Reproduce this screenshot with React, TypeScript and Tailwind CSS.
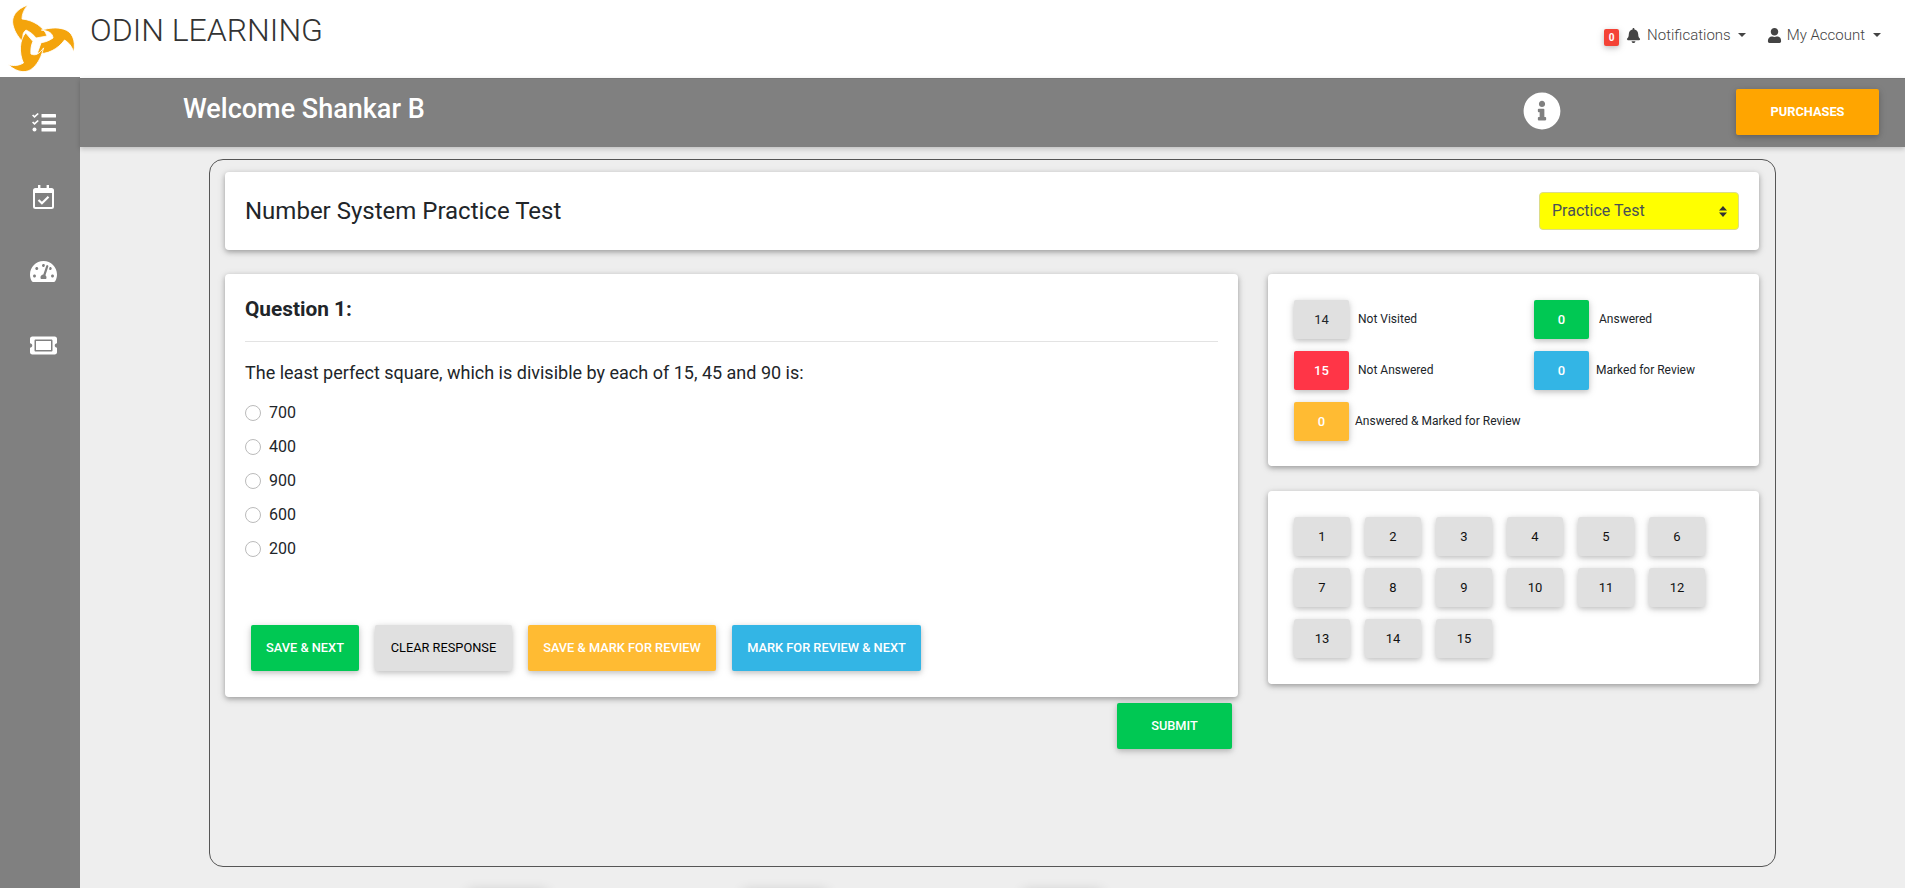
import React from "react";
import { FaBell, FaUser, FaInfoCircle, FaTachometerAlt, FaTicketAlt } from "react-icons/fa";

const shadow = "shadow-[0_2px_5px_0_rgba(0,0,0,0.16),0_2px_10px_0_rgba(0,0,0,0.12)]";
const cardShadow = "shadow-[0_2px_5px_0_rgba(0,0,0,0.26),0_2px_10px_0_rgba(0,0,0,0.12)]";

const Logo = () => {
  const arm =
    "M28 5C16 9 11 17 13 25C15 33 19 38 25 44C22 37 22 33 26 30C30 32 33 34 36 38L47 36C44 27 33 20 22 19C22 14 24 9 28 5Z";
  return (
    <svg width="80" height="78" viewBox="0 0 80 78">
      <path d={arm} fill="#f4a40c" stroke="#fff" strokeWidth="0.8" />
      <path d={arm} fill="#f4a40c" stroke="#fff" strokeWidth="0.8" transform="translate(1 1) rotate(120 37 41)" />
      <path d={arm} fill="#f4a40c" stroke="#fff" strokeWidth="0.8" transform="translate(-2 -2) rotate(240 37 41)" />
    </svg>
  );
};

const ChecklistIcon = () => (
  <svg width="24" height="20" viewBox="0 0 24 20" fill="#fff">
    <path d="M0 2.5l1.2-1 1.3 1.3L5.6 0 6.8 1 2.5 5z" />
    <path d="M0 9.5l1.2-1 1.3 1.3L5.6 7l1.2 1-4.3 4z" />
    <circle cx="2.5" cy="16.5" r="2" />
    <rect x="9.5" y="1" width="14.5" height="3.6" rx="0.6" />
    <rect x="9.5" y="8" width="14.5" height="3.6" rx="0.6" />
    <rect x="9.5" y="15" width="14.5" height="3.6" rx="0.6" />
  </svg>
);

const CalendarIcon = () => (
  <svg width="21" height="24" viewBox="0 0 21 24" fill="none">
    <rect x="1" y="4" width="19" height="19" rx="1.5" stroke="#fff" strokeWidth="2" />
    <path d="M1 4h19v4H1z" fill="#fff" />
    <path d="M5 0h2.4v4H5zM13.6 0H16v4h-2.4z" fill="#fff" />
    <path d="M5.5 15l3.4 3.2 6.6-6.4" stroke="#fff" strokeWidth="2.2" />
  </svg>
);

const Caret = ({ className }: { className: string }) => (
  <span className={`${className} inline-block border-x-[4px] border-t-[4px] border-x-transparent border-t-[#444]`} />
);

const SideItem = ({ children }: { children: React.ReactNode }) => (
  <div className="flex h-[74px] items-center justify-center pl-[7px]">{children}</div>
);

const Btn = ({ label, color }: { label: string; color: string }) => (
  <button className={`h-[46px] rounded-[2px] px-[15px] text-[12.8px] uppercase ${color} ${shadow}`}>
    {label}
  </button>
);

const Legend = ({ n, label, color, gap }: { n: number; label: string; color: string; gap: string }) => (
  <div className="flex h-[39px] items-center">
    <div className={`flex h-[39px] w-[55px] items-center justify-center rounded-[2px] text-[13px] ${color} ${shadow}`}>
      {n}
    </div>
    <span className={`${gap} -mt-[2px] text-[12px] text-[#212529]`}>{label}</span>
  </div>
);

export default function App() {
  const options = ["700", "400", "900", "600", "200"];
  const numbers = Array.from({ length: 15 }, (_, i) => i + 1);

  return (
    <div className="flex h-[888px] overflow-hidden bg-[#eeeeee] font-['Roboto',sans-serif] text-[#212529]">
      {/* Sidebar */}
      <aside className="w-[80px] shrink-0 bg-[#808080]">
        <div className="h-[77px] bg-white">
          <Logo />
        </div>
        <div className="pt-[9px]">
          <SideItem><ChecklistIcon /></SideItem>
          <SideItem><CalendarIcon /></SideItem>
          <SideItem><FaTachometerAlt className="text-[27px] text-white" /></SideItem>
          <SideItem><FaTicketAlt className="text-[27px] text-white" /></SideItem>
        </div>
      </aside>

      <div className="min-w-0 flex-1">
        {/* Top nav */}
        <header className="flex h-[78px] items-start justify-between bg-white pl-[10px] pr-[24px]">
          <div className="mt-[10px] text-[32px] font-light leading-[40px] text-[#333]">ODIN LEARNING</div>
          <div className="mt-[24px] flex items-center text-[15px] font-light text-[#444]">
            <span className={`mt-[4px] flex h-[17px] w-[15px] items-center justify-center rounded-[2px] bg-[#f44336] text-[10px] font-bold text-white ${shadow}`}>0</span>
            <FaBell className="ml-[7px] text-[15px] text-[#444]" />
            <span className="ml-[6px]">Notifications</span>
            <Caret className="ml-[7px]" />
            <FaUser className="ml-[21px] text-[15px] text-[#444]" />
            <span className="ml-[5px]">My Account</span>
            <Caret className="ml-[8px]" />
          </div>
        </header>

        {/* Welcome bar */}
        <div className="relative flex h-[69px] items-center border-t border-[#777] bg-[#808080] pl-[103px] pr-[26px] shadow-[0_2px_5px_0_rgba(0,0,0,0.2)]">
          <div className="-mt-[8px] w-[1340px] text-[27px] font-medium leading-[40px] text-white">Welcome Shankar B</div>
          <FaInfoCircle className="-mt-[4px] text-[38px] text-white" />
          <button className={`ml-auto -mt-[3px] h-[46px] w-[143px] rounded-[2px] bg-[#ffa500] text-[12.8px] font-bold uppercase text-white ${shadow}`}>
            Purchases
          </button>
        </div>

        {/* Test panel */}
        <main className="ml-[129px] mt-[12px] h-[708px] w-[1567px] rounded-[14px] border border-[#555] pl-[15px] pr-[16px] pt-[12px]">
          <div className={`flex h-[78px] items-center justify-between rounded-[4px] bg-white pl-[20px] pr-[20px] ${cardShadow}`}>
            <h1 className="text-[24px] leading-[36px]">Number System Practice Test</h1>
            <div className="relative">
              <select className="h-[38px] w-[200px] appearance-none rounded-[4px] border border-[#dcdc8a] bg-[#ffff00] pl-[12px] text-[16px] text-[#495057]">
                <option>Practice Test</option>
              </select>
              <svg className="absolute right-[12px] top-[14px]" width="8" height="11" viewBox="0 0 8 11" fill="#333">
                <path d="M4 0l4 4.5H0zM4 11L0 6.5h8z" />
              </svg>
            </div>
          </div>

          <div className="mt-[24px] grid grid-cols-[1013px_491px] gap-x-[30px]">
            {/* Question column */}
            <div>
              <section className={`h-[423px] rounded-[4px] bg-white ${cardShadow}`}>
                <div className="px-[20px] pt-[20px]">
                  <h2 className="text-[20.8px] font-bold leading-[31px]">Question 1:</h2>
                  <hr className="mt-[16px] border-[#e3e3e3]" />
                  <p className="mt-[17px] text-[18px] leading-[27px]">
                    The least perfect square, which is divisible by each of 15, 45 and 90 is:
                  </p>
                  <div className="mt-[10px]">
                    {options.map((o) => (
                      <label key={o} className="flex h-[34px] items-center text-[16px]">
                        <span className="h-[16px] w-[16px] rounded-full border border-[#bbb]" />
                        <span className="ml-[8px]">{o}</span>
                      </label>
                    ))}
                  </div>
                </div>
                <div className="ml-[26px] mt-[59px] flex gap-[16px]">
                  <Btn label="Save & Next" color="bg-[#00c853] font-medium text-white" />
                  <Btn label="Clear Response" color="w-[137px] bg-[#e0e0e0] text-black" />
                  <Btn label="Save & Mark for Review" color="w-[188px] bg-[#ffbb33] font-medium text-white" />
                  <Btn label="Mark for Review & Next" color="w-[189px] bg-[#33b5e5] font-medium text-white" />
                </div>
              </section>
              <div className="mt-[6px] flex justify-end pr-[6px]">
                <button className={`h-[46px] w-[115px] rounded-[2px] bg-[#00c853] text-[12.8px] font-medium uppercase text-white ${shadow}`}>
                  Submit
                </button>
              </div>
            </div>

            {/* Status column */}
            <div>
              <section className={`h-[192px] rounded-[4px] bg-white px-[26px] pt-[26px] ${cardShadow}`}>
                <div className="grid grid-cols-[240px_1fr] gap-y-[12px]">
                  <Legend n={14} label="Not Visited" color="bg-[#e0e0e0] text-[#212529]" gap="ml-[9px]" />
                  <Legend n={0} label="Answered" color="bg-[#00c853] font-medium text-white" gap="ml-[10px]" />
                  <Legend n={15} label="Not Answered" color="bg-[#ff3547] font-medium text-white" gap="ml-[9px]" />
                  <Legend n={0} label="Marked for Review" color="bg-[#33b5e5] font-medium text-white" gap="ml-[7px]" />
                  <Legend n={0} label="Answered & Marked for Review" color="bg-[#ffbb33] font-medium text-white" gap="ml-[6px]" />
                </div>
              </section>
              <section className={`mt-[25px] h-[193px] rounded-[4px] bg-white px-[26px] pt-[26px] ${cardShadow}`}>
                <div className="grid grid-cols-[repeat(6,56px)] gap-x-[15px] gap-y-[12px]">
                  {numbers.map((n) => (
                    <div key={n} className={`flex h-[39px] items-center justify-center rounded-[3px] bg-[#e0e0e0] text-[13px] text-[#111] ${shadow}`}>
                      {n}
                    </div>
                  ))}
                </div>
              </section>
            </div>
          </div>
        </main>

        {/* Footer tiles, only their shadow shows above the fold */}
        <div className="ml-[390px] mt-[26px] flex gap-[200px]">
          <div className="h-[40px] w-[75px] shadow-[0_0_12px_2px_rgba(0,0,0,0.16)]" />
          <div className="h-[40px] w-[80px] shadow-[0_0_12px_2px_rgba(0,0,0,0.16)]" />
          <div className="h-[40px] w-[75px] shadow-[0_0_12px_2px_rgba(0,0,0,0.16)]" />
        </div>
      </div>
    </div>
  );
}
